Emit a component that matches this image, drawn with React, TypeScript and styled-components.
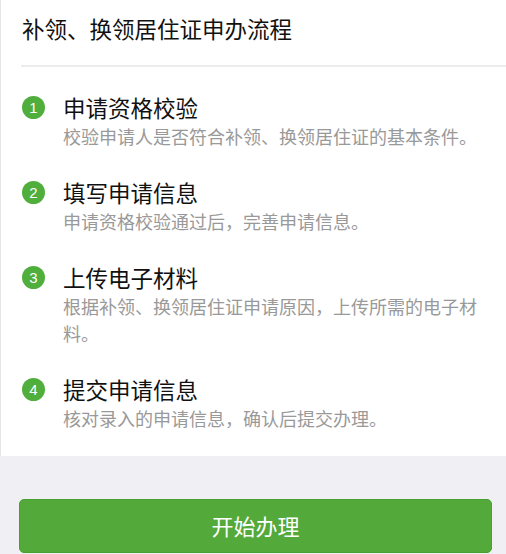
import React from "react";
import styled, { createGlobalStyle } from "styled-components";

const GlobalStyle = createGlobalStyle`
  html, body {
    margin: 0;
    padding: 0;
    background: #efeff4;
    font-family: "Noto Sans CJK SC", "Noto Sans", sans-serif;
  }
`;

const Page = styled.div`
  display: flex;
  flex-direction: column;
  width: 506px;
`;

const Card = styled.section`
  background: #ffffff;
  border-left: 1px solid #e6e6e6;
`;

const Header = styled.header`
  margin-left: 20px;
  padding: 12px 0 21px 1px;
  border-bottom: 2px solid #ececec;
`;

const HeaderTitle = styled.h1`
  margin: 0;
  font-size: 22.5px;
  line-height: 32px;
  font-weight: 400;
  color: #111111;
`;

const StepList = styled.ol`
  list-style: none;
  margin: 0;
  padding: 24px 20px 24px 21px;
  display: flex;
  flex-direction: column;
  gap: 26px;
`;

const Step = styled.li`
  display: grid;
  grid-template-columns: 23px 1fr;
  column-gap: 18px;
  align-items: start;
`;

const Badge = styled.span`
  width: 23px;
  height: 23px;
  margin-top: 5px;
  border-radius: 50%;
  background: #4fae3c;
  color: #ffffff;
  display: flex;
  align-items: center;
  justify-content: center;
  font-family: "Liberation Sans", Arial, sans-serif;
  font-size: 15px;
  line-height: 1;
`;

const StepBody = styled.div`
  display: flex;
  flex-direction: column;
`;

const StepTitle = styled.h2`
  margin: 0;
  font-size: 22.5px;
  line-height: 32px;
  font-weight: 400;
  color: #111111;
`;

const StepDesc = styled.p`
  margin: 0;
  font-size: 18px;
  line-height: 27px;
  color: #999999;
`;

const Footer = styled.div`
  padding: 43px 14px 0 19px;
`;

const PrimaryButton = styled.button`
  width: 100%;
  height: 54px;
  padding: 0 0 3px;
  border: 1px solid #4a9f33;
  border-radius: 5px;
  background: #53a93a;
  color: #ffffff;
  display: flex;
  align-items: center;
  justify-content: center;
  font-family: "Noto Sans CJK SC", "Noto Sans", sans-serif;
  font-size: 22px;
  line-height: 30px;
  cursor: pointer;
`;

const steps = [
  { title: "申请资格校验", desc: "校验申请人是否符合补领、换领居住证的基本条件。" },
  { title: "填写申请信息", desc: "申请资格校验通过后，完善申请信息。" },
  { title: "上传电子材料", desc: "根据补领、换领居住证申请原因，上传所需的电子材料。" },
  { title: "提交申请信息", desc: "核对录入的申请信息，确认后提交办理。" },
];

export default function App() {
  return (
    <>
      <GlobalStyle />
      <Page>
        <Card>
          <Header>
            <HeaderTitle>补领、换领居住证申办流程</HeaderTitle>
          </Header>
          <StepList>
            {steps.map((s, i) => (
              <Step key={s.title}>
                <Badge>{i + 1}</Badge>
                <StepBody>
                  <StepTitle>{s.title}</StepTitle>
                  <StepDesc>{s.desc}</StepDesc>
                </StepBody>
              </Step>
            ))}
          </StepList>
        </Card>
        <Footer>
          <PrimaryButton>开始办理</PrimaryButton>
        </Footer>
      </Page>
    </>
  );
}
